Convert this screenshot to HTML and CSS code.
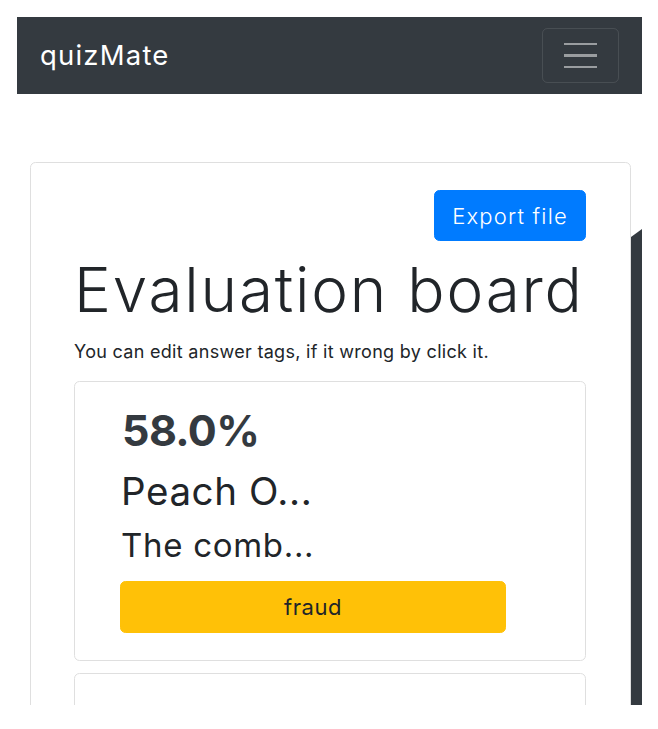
FILE: index.html
```html
<!DOCTYPE html>
<html lang="en">
<head>
<meta charset="utf-8">
<title>quizMate</title>
<link rel="stylesheet" href="styles.css">
</head>
<body>
<div class="frame">
  <nav class="navbar">
    <span class="brand">quizMate</span>
    <button class="toggler" aria-label="Toggle navigation">
      <span class="toggler-bar"></span>
      <span class="toggler-bar"></span>
      <span class="toggler-bar"></span>
    </button>
  </nav>
  <main class="main">
    <section class="card">
      <div class="toolbar">
        <button class="btn-export">Export file</button>
      </div>
      <h1 class="title">Evaluation board</h1>
      <p class="lead">You can edit answer tags, if it wrong by click it.</p>
      <article class="item">
        <h2 class="score">58.0%</h2>
        <h3 class="question">Peach O...</h3>
        <h4 class="answer">The comb...</h4>
        <button class="tag">fraud</button>
      </article>
      <article class="item item-next"></article>
    </section>
  </main>
  <div class="side-strip"></div>
</div>
</body>
</html>
```
FILE: styles.css
```css
* { box-sizing: border-box; }
html, body { margin: 0; padding: 0; background: #fff; }
body { font-family: "Inter", "Liberation Sans", sans-serif; color: #212529; }

.frame {
  position: relative;
  margin: 17px 0 0 17px;
  width: 625px;
  height: 688px;
  overflow: hidden;
}

.navbar {
  height: 77px;
  background: #343a40;
  display: flex;
  align-items: center;
  justify-content: space-between;
  padding: 0 23px 0 23px;
}
.brand {
  color: #fff;
  font-size: 27.5px;
  font-weight: 400;
  letter-spacing: 1.2px;
  line-height: 1;
}
.toggler {
  width: 77px;
  height: 55px;
  border: 1px solid rgba(255,255,255,0.1);
  border-radius: 5.5px;
  background: transparent;
  display: flex;
  flex-direction: column;
  align-items: center;
  justify-content: center;
  gap: 9px;
  padding: 0;
}
.toggler-bar {
  display: block;
  width: 33px;
  height: 2.5px;
  background: rgba(255,255,255,0.5);
}

.main {
  padding: 68px 0 0 13px;
}
.card {
  width: 601px;
  border: 1px solid #dfdfdf;
  border-radius: 5.5px;
  padding: 27px 44px 0 43px;
  min-height: 700px;
}
.toolbar {
  display: flex;
  justify-content: flex-end;
}
.btn-export {
  height: 51px;
  padding: 0 17px;
  background: #007bff;
  border: 1px solid #007bff;
  border-radius: 5.5px;
  color: #fff;
  font-family: inherit;
  font-size: 22px;
  font-weight: 300;
  letter-spacing: 1.2px;
}
.title {
  margin: 12px 0 0 0;
  font-size: 62px;
  font-weight: 300;
  line-height: 74px;
  letter-spacing: 1.8px;
  color: #212529;
}
.lead {
  margin: 11px 0 0 0;
  font-size: 18px;
  line-height: 28px;
  font-weight: 400;
  letter-spacing: 0.3px;
  color: #212529;
}
.item {
  margin-top: 15px;
  border: 1px solid #dfdfdf;
  border-radius: 5.5px;
  padding: 22px 0 27px 45px;
}
.score {
  margin: 0 0 0 2px;
  font-size: 43px;
  font-weight: 700;
  line-height: 52px;
  letter-spacing: -0.6px;
  color: #343a40;
}
.question {
  margin: 12px 0 0 1px;
  font-size: 38.5px;
  font-weight: 400;
  line-height: 46px;
  letter-spacing: 0.6px;
  color: #212529;
}
.answer {
  margin: 11px 0 0 1px;
  font-size: 33px;
  font-weight: 400;
  line-height: 40px;
  letter-spacing: 0.7px;
  color: #212529;
}
.tag {
  margin-top: 16px;
  width: 386px;
  height: 52px;
  background: #ffc107;
  border: 1px solid #ffc107;
  border-radius: 5.5px;
  color: #212529;
  font-family: inherit;
  font-size: 22px;
  letter-spacing: 0.5px;
}
.item-next {
  margin-top: 12px;
  height: 60px;
  padding: 0;
}

.side-strip {
  position: absolute;
  left: 614px;
  top: 212px;
  width: 11px;
  bottom: 0;
  background: #343a40;
  clip-path: polygon(0 8px, 100% 0, 100% 100%, 0 100%);
}
```
